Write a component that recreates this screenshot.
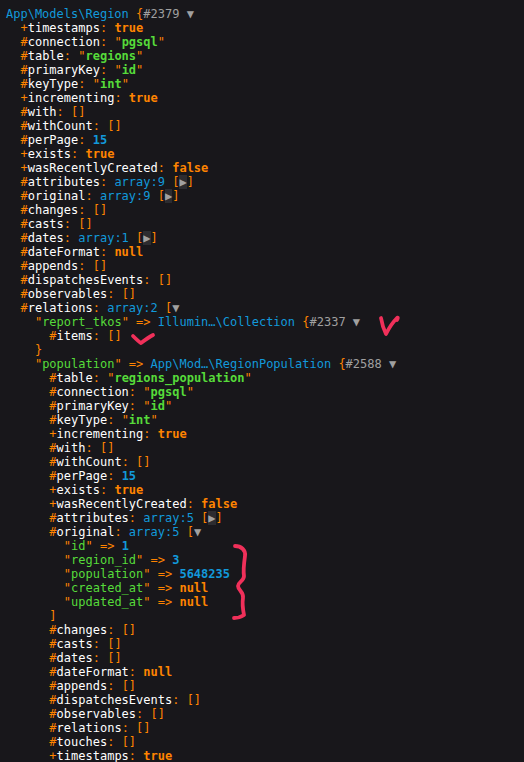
import React from 'react';

type Tok = [string, string];

const cls: Record<string, string> = {
  p: 'text-[#ff8400]',
  k: 'text-white',
  s: 'text-[#56db3a] font-bold',
  sk: 'text-[#56db3a]',
  n: 'text-[#1299da] font-bold',
  c: 'text-[#ff8400] font-bold',
  note: 'text-[#1299da]',
  ref: 'text-[#a0a0a0]',
  tg: 'text-[#a0a0a0]',
  tgc: 'text-[#a0a0a0] bg-[#2c2c30]',
};

// helpers for building lines
const prop = (sigil: string, name: string, rest: Tok[]): Tok[] => [['p', sigil], ['k', name], ['p', ': '], ...rest];
const str = (v: string): Tok[] => [['p', '"'], ['s', v], ['p', '"']];
const key = (v: string): Tok[] => [['p', '"'], ['sk', v], ['p', '"'], ['p', ' => ']];
const closed = (note: string): Tok[] => [['note', note], ['p', ' ['], ['tgc', '▶'], ['p', ']']];
const empty: Tok[] = [['p', '[]']];

const lines: [number, Tok[]][] = [
  [0, [['note', 'App\\Models\\Region'], ['p', ' {'], ['ref', '#2379'], ['tg', ' ▼']]],
  [2, prop('+', 'timestamps', [['c', 'true']])],
  [2, prop('#', 'connection', str('pgsql'))],
  [2, prop('#', 'table', str('regions'))],
  [2, prop('#', 'primaryKey', str('id'))],
  [2, prop('#', 'keyType', str('int'))],
  [2, prop('+', 'incrementing', [['c', 'true']])],
  [2, prop('#', 'with', empty)],
  [2, prop('#', 'withCount', empty)],
  [2, prop('#', 'perPage', [['n', '15']])],
  [2, prop('+', 'exists', [['c', 'true']])],
  [2, prop('+', 'wasRecentlyCreated', [['c', 'false']])],
  [2, prop('#', 'attributes', closed('array:9'))],
  [2, prop('#', 'original', closed('array:9'))],
  [2, prop('#', 'changes', empty)],
  [2, prop('#', 'casts', empty)],
  [2, prop('#', 'dates', closed('array:1'))],
  [2, prop('#', 'dateFormat', [['c', 'null']])],
  [2, prop('#', 'appends', empty)],
  [2, prop('#', 'dispatchesEvents', empty)],
  [2, prop('#', 'observables', empty)],
  [2, prop('#', 'relations', [['note', 'array:2'], ['p', ' ['], ['tg', '▼']])],
  [4, [...key('report_tkos'), ['note', 'Illumin…\\Collection'], ['p', ' {'], ['ref', '#2337'], ['tg', ' ▼']]],
  [6, prop('#', 'items', empty)],
  [4, [['p', '}']]],
  [4, [...key('population'), ['note', 'App\\Mod…\\RegionPopulation'], ['p', ' {'], ['ref', '#2588'], ['tg', ' ▼']]],
  [6, prop('#', 'table', str('regions_population'))],
  [6, prop('#', 'connection', str('pgsql'))],
  [6, prop('#', 'primaryKey', str('id'))],
  [6, prop('#', 'keyType', str('int'))],
  [6, prop('+', 'incrementing', [['c', 'true']])],
  [6, prop('#', 'with', empty)],
  [6, prop('#', 'withCount', empty)],
  [6, prop('#', 'perPage', [['n', '15']])],
  [6, prop('+', 'exists', [['c', 'true']])],
  [6, prop('+', 'wasRecentlyCreated', [['c', 'false']])],
  [6, prop('#', 'attributes', closed('array:5'))],
  [6, prop('#', 'original', [['note', 'array:5'], ['p', ' ['], ['tg', '▼']])],
  [8, [...key('id'), ['n', '1']]],
  [8, [...key('region_id'), ['n', '3']]],
  [8, [...key('population'), ['n', '5648235']]],
  [8, [...key('created_at'), ['c', 'null']]],
  [8, [...key('updated_at'), ['c', 'null']]],
  [6, [['p', ']']]],
  [6, prop('#', 'changes', empty)],
  [6, prop('#', 'casts', empty)],
  [6, prop('#', 'dates', empty)],
  [6, prop('#', 'dateFormat', [['c', 'null']])],
  [6, prop('#', 'appends', empty)],
  [6, prop('#', 'dispatchesEvents', empty)],
  [6, prop('#', 'observables', empty)],
  [6, prop('#', 'relations', empty)],
  [6, prop('#', 'touches', empty)],
  [6, prop('+', 'timestamps', [['c', 'true']])],
];

export default function App() {
  return (
    <div className="relative w-[524px] h-[762px] overflow-hidden bg-[#18171b]">
      <pre className="pt-[7px] pl-[6px] text-[12px] leading-[14px] font-['DejaVu_Sans_Mono',monospace] whitespace-pre">
        {lines.map(([indent, toks], i) => (
          <div key={i}>
            {' '.repeat(indent)}
            {toks.map(([t, v], j) => (
              <span key={j} className={cls[t]}>{v}</span>
            ))}
          </div>
        ))}
      </pre>

      {/* red pen marks drawn over the dump */}
      <svg className="absolute left-0 top-0" width="524" height="762" fill="none" stroke="#f0305a" strokeWidth="3.8" strokeLinecap="round" strokeLinejoin="round">
        <path d="M381 318 C382 324 384 330 386 334 C389 328 393 322 397 318 C398 317 398 318 397 320" />
        <path d="M133 336 C136 339 139 342 141 343 C145 340 149 337 153 335" />
        <path d="M235 546 C241 546 246 550 245 556 C244 563 243 570 244 576 C244 581 238 582 238 586 C238 590 244 592 243 598 C242 604 243 610 244 615 C241 617 237 618 234 618" />
      </svg>
    </div>
  );
}
